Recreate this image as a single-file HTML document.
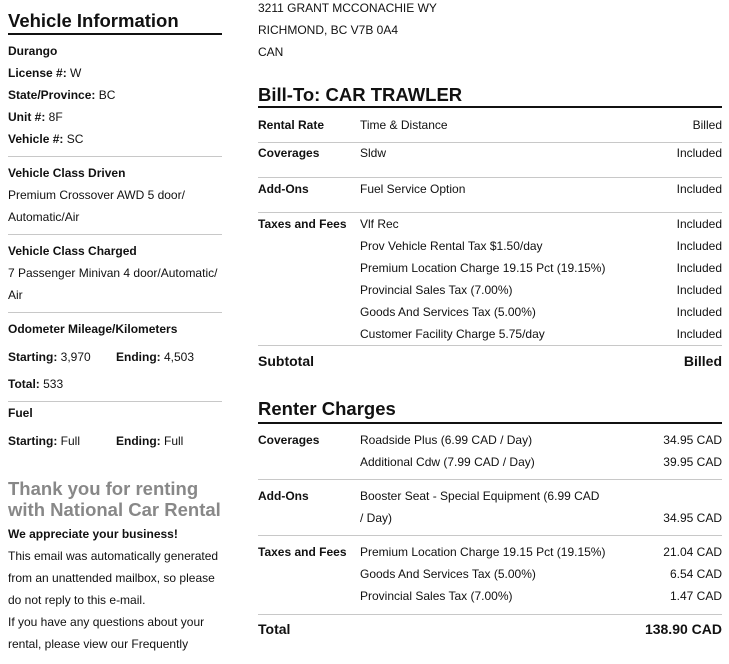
<!DOCTYPE html>
<html><head><meta charset="utf-8"><style>
body{margin:0;width:729px;height:664px;overflow:hidden;background:#fff;font-family:"Liberation Sans",Arial,sans-serif;color:#111;position:relative}
div{position:absolute;white-space:nowrap}
.t{font-size:12px;line-height:14px}
.b{font-weight:bold}
.h{font-size:18.5px;font-weight:bold;line-height:22px}
.r{text-align:right;right:7px}
.l{height:1px;background:#c8c8c8}
.k{height:2px;background:#111}
.L{left:8px;width:214px}
.R{left:258px;width:464px}
.g{color:#888}
</style></head><body>
<div class="h" style="left:8px;top:10px">Vehicle Information</div>
<div class="k L" style="top:33px"></div>
<div class="t b" style="left:8px;top:44px">Durango</div>
<div class="t" style="left:8px;top:66px"><b>License #:</b> W</div>
<div class="t" style="left:8px;top:88px"><b>State/Province:</b> BC</div>
<div class="t" style="left:8px;top:110px"><b>Unit #:</b> 8F</div>
<div class="t" style="left:8px;top:132px"><b>Vehicle #:</b> SC</div>
<div class="l L" style="top:156px"></div>
<div class="t b" style="left:8px;top:166px">Vehicle Class Driven</div>
<div class="t" style="left:8px;top:188px">Premium Crossover AWD 5 door/</div>
<div class="t" style="left:8px;top:210px">Automatic/Air</div>
<div class="l L" style="top:234px"></div>
<div class="t b" style="left:8px;top:244px">Vehicle Class Charged</div>
<div class="t" style="left:8px;top:266px">7 Passenger Minivan 4 door/Automatic/</div>
<div class="t" style="left:8px;top:288px">Air</div>
<div class="l L" style="top:312px"></div>
<div class="t b" style="left:8px;top:322px">Odometer Mileage/Kilometers</div>
<div class="t" style="left:8px;top:350px"><b>Starting:</b> 3,970</div>
<div class="t" style="left:116px;top:350px"><b>Ending:</b> 4,503</div>
<div class="t" style="left:8px;top:377px"><b>Total:</b> 533</div>
<div class="l L" style="top:401px"></div>
<div class="t b" style="left:8px;top:406px">Fuel</div>
<div class="t" style="left:8px;top:434px"><b>Starting:</b> Full</div>
<div class="t" style="left:116px;top:434px"><b>Ending:</b> Full</div>
<div class="h g" style="left:8px;top:478px;line-height:21px">Thank you for renting<br>with National Car Rental</div>
<div class="t b" style="left:8px;top:527px">We appreciate your business!</div>
<div class="t" style="left:8px;top:545px;line-height:22px">This email was automatically generated<br>from an unattended mailbox, so please<br>do not reply to this e-mail.<br>If you have any questions about your<br>rental, please view our Frequently</div>

<div class="t" style="left:258px;top:-3px;line-height:22px">3211 GRANT MCCONACHIE WY<br>RICHMOND, BC V7B 0A4<br>CAN</div>
<div class="h" style="left:258px;top:84px">Bill-To: CAR TRAWLER</div>
<div class="k R" style="top:106px"></div>
<div class="t b" style="left:258px;top:118px">Rental Rate</div><div class="t" style="left:360px;top:118px">Time &amp; Distance</div><div class="t r" style="top:118px">Billed</div>
<div class="l R" style="top:142px"></div>
<div class="t b" style="left:258px;top:146px">Coverages</div><div class="t" style="left:360px;top:146px">Sldw</div><div class="t r" style="top:146px">Included</div>
<div class="l R" style="top:177px"></div>
<div class="t b" style="left:258px;top:182px">Add-Ons</div><div class="t" style="left:360px;top:182px">Fuel Service Option</div><div class="t r" style="top:182px">Included</div>
<div class="l R" style="top:212px"></div>
<div class="t b" style="left:258px;top:217px">Taxes and Fees</div>
<div class="t" style="left:360px;top:213px;line-height:22px">Vlf Rec<br>Prov Vehicle Rental Tax $1.50/day<br>Premium Location Charge 19.15 Pct (19.15%)<br>Provincial Sales Tax (7.00%)<br>Goods And Services Tax (5.00%)<br>Customer Facility Charge 5.75/day</div>
<div class="t r" style="top:213px;line-height:22px">Included<br>Included<br>Included<br>Included<br>Included<br>Included</div>
<div class="l R" style="top:345px"></div>
<div class="t b" style="left:258px;top:353px;font-size:14px;line-height:16px">Subtotal</div><div class="t b r" style="top:353px;font-size:14px;line-height:16px">Billed</div>
<div class="h" style="left:258px;top:398px">Renter Charges</div>
<div class="k R" style="top:422px"></div>
<div class="t b" style="left:258px;top:433px">Coverages</div>
<div class="t" style="left:360px;top:429px;line-height:22px">Roadside Plus (6.99 CAD / Day)<br>Additional Cdw (7.99 CAD / Day)</div>
<div class="t r" style="top:429px;line-height:22px">34.95 CAD<br>39.95 CAD</div>
<div class="l R" style="top:479px"></div>
<div class="t b" style="left:258px;top:489px">Add-Ons</div>
<div class="t" style="left:360px;top:485px;line-height:22px">Booster Seat - Special Equipment (6.99 CAD<br>/ Day)</div>
<div class="t r" style="top:511px">34.95 CAD</div>
<div class="l R" style="top:535px"></div>
<div class="t b" style="left:258px;top:545px">Taxes and Fees</div>
<div class="t" style="left:360px;top:541px;line-height:22px">Premium Location Charge 19.15 Pct (19.15%)<br>Goods And Services Tax (5.00%)<br>Provincial Sales Tax (7.00%)</div>
<div class="t r" style="top:541px;line-height:22px">21.04 CAD<br>6.54 CAD<br>1.47 CAD</div>
<div class="l R" style="top:614px"></div>
<div class="t b" style="left:258px;top:621px;font-size:14px;line-height:16px">Total</div><div class="t b r" style="top:621px;font-size:14px;line-height:16px">138.90 CAD</div>
</body></html>
